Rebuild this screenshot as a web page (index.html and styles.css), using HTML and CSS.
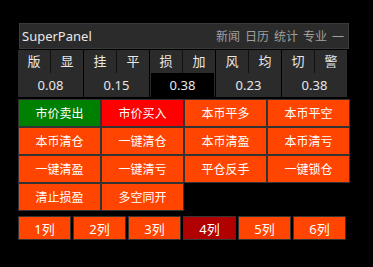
FILE: index.html
```html
<!DOCTYPE html>
<html lang="zh-CN">
<head>
    <meta charset="UTF-8">
    <meta name="viewport" content="width=device-width, initial-scale=1.0">
    <title>SuperPanel</title>
    <link rel="stylesheet" href="styles.css">
</head>
<body>
    <div class="panel">
        <div class="titlebar">
            <span class="title">SuperPanel</span>
            <div class="menu">
                <span>新闻</span>
                <span>日历</span>
                <span>统计</span>
                <span>专业</span>
                <span>—</span>
            </div>
        </div>

        <div class="stats">
            <div class="group">
                <div class="labels"><span>版</span><span>显</span></div>
                <div class="value">0.08</div>
            </div>
            <div class="group">
                <div class="labels"><span>挂</span><span>平</span></div>
                <div class="value">0.15</div>
            </div>
            <div class="group">
                <div class="labels"><span>损</span><span>加</span></div>
                <div class="value active">0.38</div>
            </div>
            <div class="group">
                <div class="labels"><span>风</span><span>均</span></div>
                <div class="value">0.23</div>
            </div>
            <div class="group">
                <div class="labels"><span>切</span><span>警</span></div>
                <div class="value">0.38</div>
            </div>
        </div>

        <div class="buttons">
            <div class="btn green">市价卖出</div>
            <div class="btn red">市价买入</div>
            <div class="btn">本币平多</div>
            <div class="btn">本币平空</div>
            <div class="btn">本币清仓</div>
            <div class="btn">一键清仓</div>
            <div class="btn">本币清盈</div>
            <div class="btn">本币清亏</div>
            <div class="btn">一键清盈</div>
            <div class="btn">一键清亏</div>
            <div class="btn">平仓反手</div>
            <div class="btn">一键锁仓</div>
            <div class="btn">清止损盈</div>
            <div class="btn">多空同开</div>
        </div>

        <div class="tabs">
            <div class="tab">1列</div>
            <div class="tab">2列</div>
            <div class="tab">3列</div>
            <div class="tab selected">4列</div>
            <div class="tab">5列</div>
            <div class="tab">6列</div>
        </div>
    </div>
</body>
</html>
```

FILE: styles.css
```css
body {
    margin: 0;
    background-color: #000;
    color: #ffffff;
    font-family: "Noto Sans", "Noto Sans CJK SC", sans-serif;
}
.panel {
    padding: 23px 0 0 18px;
    width: 332px;
}
.titlebar {
    box-sizing: border-box;
    margin-left: 1px;
    width: 330px;
    height: 26px;
    background-color: #2b2b2b;
    border: 1px solid #3a3a3a;
    display: flex;
    align-items: center;
    justify-content: space-between;
    padding: 0 4px 0 2px;
}
.title {
    font-size: 13px;
    color: #e8e8e8;
}
.menu {
    display: flex;
    gap: 5px;
    font-size: 12px;
    color: #a0a0a0;
}
.stats {
    margin-top: 1px;
    display: flex;
    gap: 1px;
    height: 47px;
}
.group {
    width: 65px;
    background-color: #2b2b2b;
    display: flex;
    flex-direction: column;
}
.labels {
    display: flex;
    height: 23px;
}
.labels span {
    flex: 1;
    text-align: center;
    line-height: 23px;
    font-size: 13px;
    color: #e8e8e8;
}
.labels span + span {
    border-left: 1px solid #111;
}
.value {
    height: 24px;
    line-height: 24px;
    text-align: center;
    font-size: 13px;
    color: #e8e8e8;
}
.value.active {
    background-color: #000;
    margin: 0 1px;
}
.buttons {
    margin-top: 2px;
    display: grid;
    grid-template-columns: repeat(4, 83px);
    grid-auto-rows: 28px;
}
.btn {
    box-sizing: border-box;
    border: 1px solid #333;
    background-color: #ff4500;
    font-size: 12px;
    display: flex;
    align-items: center;
    justify-content: center;
}
.btn.green {
    background-color: #008000;
}
.btn.red {
    background-color: #ff0000;
}
.tabs {
    margin-top: 5px;
    display: flex;
    gap: 2px;
}
.tab {
    box-sizing: border-box;
    width: 53px;
    height: 24px;
    border: 1px solid #333;
    background-color: #ff4500;
    font-size: 13px;
    display: flex;
    align-items: center;
    justify-content: center;
}
.tab.selected {
    background-color: #b00000;
}
```
